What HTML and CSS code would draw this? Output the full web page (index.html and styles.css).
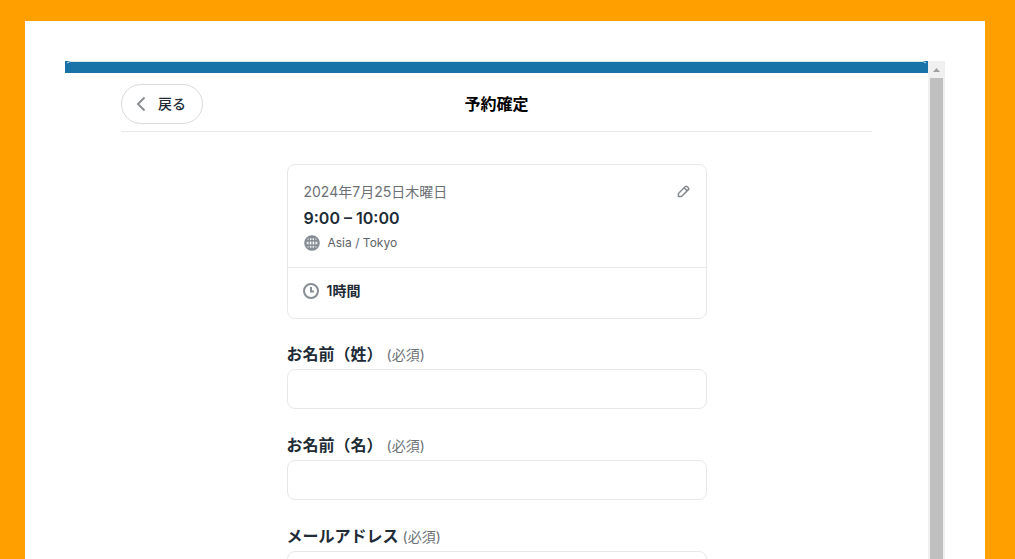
FILE: index.html
```html
<!DOCTYPE html>
<html lang="ja">
<head>
<meta charset="utf-8">
<meta name="viewport" content="width=device-width, initial-scale=1">
<title>予約確定</title>
<link rel="stylesheet" href="styles.css">
</head>
<body>
<div class="sheet">
  <div class="embed">
    <main class="booking">
      <div class="accent"><div class="accent-edge"></div></div>
      <header class="topbar">
        <button class="back" type="button">
          <svg class="back-icon" viewBox="0 0 10 16" aria-hidden="true"><path d="M8.500 1.500 2 8l6.500 6.500"/></svg>
          <span>戻る</span>
        </button>
        <h1 class="title">予約確定</h1>
      </header>
      <div class="content">
        <section class="card">
          <div class="slot">
            <div class="slot-text">
              <p class="date">2024年7月25日木曜日</p>
              <p class="time">9:00 – 10:00</p>
              <p class="zone">
                <svg class="icon" viewBox="0 0 16 16" aria-hidden="true"><circle class="globe-fill" cx="8" cy="8" r="8"/><ellipse class="globe-lines" cx="8" cy="8" rx="3" ry="6.500"/><circle class="globe-lines" cx="8" cy="8" r="6.300"/><path class="globe-bars" d="M1 5.800h14M1 10.200h14M8 1v14"/><path class="globe-gaps" d="M2.500 8h2M6 8h1.300M8.700 8H10M11.500 8h2M6 4h1.300M8.700 4H10M6 12h1.300M8.700 12H10M3.500 4h1M11.500 4h1M3.500 12h1M11.500 12h1"/></svg>
                <span>Asia / Tokyo</span>
              </p>
            </div>
            <button class="edit" type="button" aria-label="編集">
              <svg class="edit-icon" viewBox="0 0 14 14" aria-hidden="true"><path d="M1.500 12.500V9.200L9 1.700q.9-.8 1.800 0l1.500 1.500q.9.900 0 1.800L4.800 12.500zM7.700 3l3.300 3.300"/></svg>
            </button>
          </div>
          <div class="duration">
            <svg class="icon" viewBox="0 0 16 16" aria-hidden="true"><circle class="clock-line" cx="8" cy="8" r="7"/><path class="clock-line" d="M8 4v4.500h3"/></svg>
            <span>1時間</span>
          </div>
        </section>
        <form class="form">
          <div class="field">
            <label class="label" for="last-name">お名前（姓） <span class="required">(必須)</span></label>
            <input class="input" id="last-name" type="text" required>
          </div>
          <div class="field">
            <label class="label" for="first-name">お名前（名） <span class="required">(必須)</span></label>
            <input class="input" id="first-name" type="text" required>
          </div>
          <div class="field">
            <label class="label" for="email">メールアドレス <span class="required">(必須)</span></label>
            <input class="input" id="email" type="email" required>
          </div>
        </form>
      </div>
    </main>
    <div class="scrollbar" aria-hidden="true">
      <svg class="scroll-arrow" viewBox="0 0 17 17"><path d="M5 11h7L8.500 7z"/></svg>
      <div class="thumb"></div>
    </div>
  </div>
</div>
</body>
</html>
```
FILE: styles.css
```css
* {
  box-sizing: border-box;
}

body {
  display: flex;
  height: 100vh;
  margin: 0;
  padding: 21px 30px 0 25px;
  overflow: hidden;
  background: #ffa000;
  color: #202b36;
  font-family: Inter, "Noto Sans CJK JP", sans-serif;
}

h1,
p {
  margin: 0;
}

.sheet {
  display: flex;
  flex: 1;
  padding: 40px 40px 0;
  background: #fff;
}

.embed {
  display: flex;
  flex: 1;
  overflow: hidden;
}

.booking {
  flex: 1;
}

.accent {
  height: 12px;
  overflow: hidden;
  background: #1a73a8;
}

.accent-edge {
  height: 24px;
  border: 1px solid #1a73a8;
  border-top-color: #d5e6ef;
  border-radius: 6px;
}

.topbar {
  display: grid;
  grid-template-columns: 1fr auto 1fr;
  align-items: center;
  margin: 0 56px;
  padding: 11px 0 7px;
  border-bottom: 1px solid #e6e7e9;
}

.back {
  display: flex;
  align-items: center;
  justify-self: start;
  gap: 12px;
  height: 40px;
  padding: 0 16px 0 14px;
  border: 1px solid #d9dadd;
  border-radius: 20px;
  background: #fff;
  color: #202b36;
  font: 500 14px/20px Inter, "Noto Sans CJK JP", sans-serif;
}

.back-icon {
  width: 10px;
  height: 16px;
  fill: none;
  stroke: #8b9095;
  stroke-width: 2;
}

.title {
  color: #000;
  font-size: 16px;
  font-weight: 700;
  line-height: 24px;
}

.content {
  max-width: 420px;
  margin: 32px auto 0;
}

.card {
  border: 1px solid #e6e8ea;
  border-radius: 8px;
}

.slot {
  display: flex;
  justify-content: space-between;
  align-items: flex-start;
  padding: 14px 16px 12px;
}

.date {
  color: #6c7176;
  font-size: 14px;
  line-height: 26px;
}

.time {
  font-size: 16px;
  font-weight: 600;
  line-height: 26px;
}

.zone {
  display: flex;
  align-items: center;
  gap: 8px;
  color: #5d6268;
  font-size: 12px;
  line-height: 24px;
}

.icon {
  width: 16px;
  height: 16px;
}

.globe-fill {
  fill: #f4f5f6;
}

.globe-lines,
.globe-bars {
  fill: none;
  stroke: #868d94;
  stroke-width: 1.5;
}

.globe-lines:nth-of-type(2) {
  stroke-width: 3;
}

.globe-gaps {
  fill: none;
  stroke: #fff;
}

.clock-line {
  fill: none;
  stroke: #868d94;
  stroke-width: 2;
}

.edit {
  margin-top: 6px;
  padding: 0;
  border: 0;
  background: none;
}

.edit-icon {
  display: block;
  width: 13px;
  height: 13px;
  fill: none;
  stroke: #868b90;
  stroke-width: 1.6;
}

.duration {
  display: flex;
  align-items: center;
  gap: 8px;
  padding: 12px 15px 16px;
  border-top: 1px solid #e6e8ea;
  font-size: 14px;
  font-weight: 600;
  line-height: 22px;
}

.form {
  display: grid;
  gap: 24px;
  margin-top: 23px;
}

.field {
  display: grid;
  gap: 2px;
}

.label {
  font-size: 16px;
  font-weight: 600;
  line-height: 24px;
}

.required {
  color: #6c7176;
  font-size: 14px;
  font-weight: 400;
}

.input {
  width: 100%;
  height: 40px;
  padding: 0 12px;
  border: 1px solid #e6e8ea;
  border-radius: 8px;
  background: #fff;
  color: inherit;
  font: inherit;
}

.scrollbar {
  display: flex;
  flex-direction: column;
  width: 17px;
  background: #f0f0f0;
}

.scroll-arrow {
  width: 17px;
  height: 17px;
  fill: #a0a0a0;
}

.thumb {
  flex: 1;
  margin: 0 2px;
  background: #c0c0c0;
}
```
